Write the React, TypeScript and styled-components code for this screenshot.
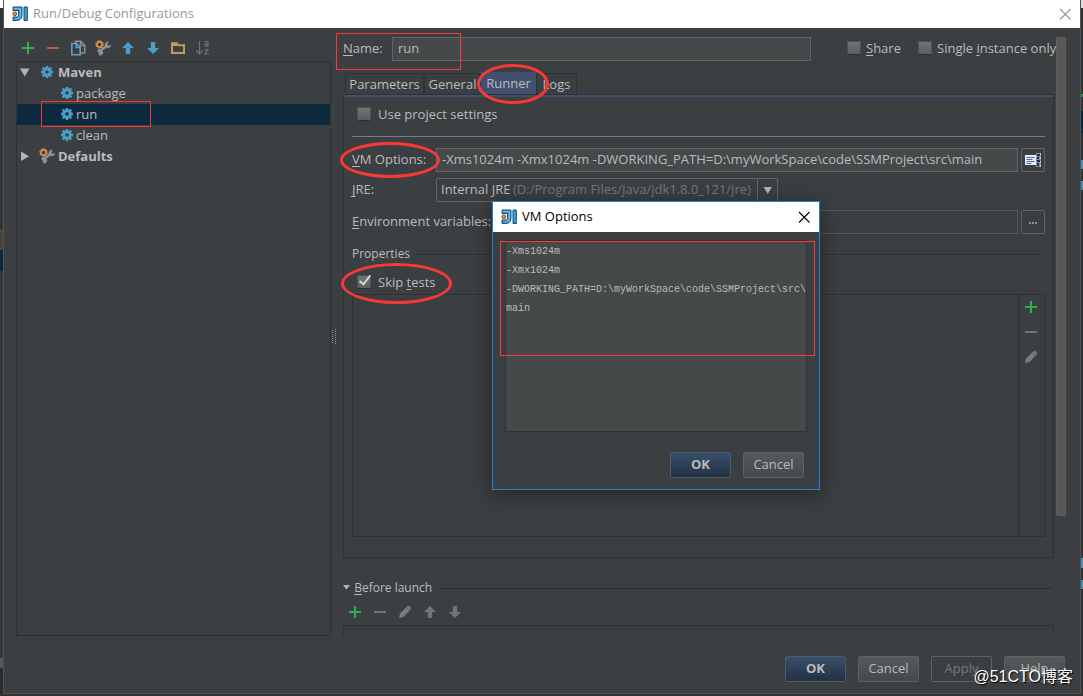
import React from "react";
import styled, { createGlobalStyle, css } from "styled-components";

const c = {
  bg: "#3c3f41",
  field: "#45494a",
  text: "#bbbbbb",
  dim: "#777777",
  edge: "#646464",
  dark: "#2f3133",
  accent: "#41506f",
  mark: "#f83a36",
};

const Global = createGlobalStyle`
  *, *::before, *::after { box-sizing: border-box; }
  body { margin: 0; background: #313335; }
  body, button, input, select, textarea {
    font-family: "Open Sans", "Noto Sans CJK SC", sans-serif;
    font-size: 13px;
    line-height: 18px;
    color: ${c.text};
  }
  u { text-decoration: underline; text-underline-offset: 2px; }
`;

const Desktop = styled.div`
  display: grid;
  grid-template-columns: 3px minmax(0, 1fr) 2px;
  height: 100vh;
  padding-bottom: 2px;
  overflow: hidden;
  position: relative;
`;

const LeftStrip = styled.div`
  background: linear-gradient(#ffffff 0 8px, #313335 8px 229px, #4a4637 229px 250px, #0d293e 250px 271px, #35383a 271px 658px, #55585a 658px 668px, #2b2b2b 668px);
`;

const RightStrip = styled.div`
  background: linear-gradient(#dddddd 0 8px, #313335 8px 94px, #2f8a46 94px 97px, #313335 97px 111px, #0d293e 111px 133px, #313335 133px 160px, #4f8cab 160px 169px, #313335 169px 181px, #4f8cab 181px 190px, #313335 190px 558px, #4f8cab 558px 568px, #313335 568px 580px, #4f8cab 580px 589px, #313335 589px);
`;

const Window = styled.div`
  display: flex;
  flex-direction: column;
  min-height: 0;
  position: relative;
  background: ${c.bg};
  border: 1px solid #515456;
  border-top: 0;
`;

const TitleBar = styled.header<{ $active?: boolean }>`
  display: flex;
  align-items: center;
  flex: none;
  height: ${(p) => (p.$active ? 30 : 28)}px;
  padding: 0 7px 0 8px;
  background: #ffffff;
  color: ${(p) => (p.$active ? "#000000" : "#999999")};
`;

const Title = styled.h1`
  flex: 1;
  margin: 0 0 2px 5px;
  font-size: 13px;
  font-weight: 400;
`;

const IconButton = styled.button`
  display: grid;
  place-items: center;
  flex: none;
  width: 16px;
  height: 16px;
  padding: 0;
  border: 0;
  background: none;
  color: inherit;
`;

const Main = styled.div`
  display: grid;
  grid-template-columns: 315px 5px minmax(0, 1fr);
  flex: 1;
  min-height: 0;
  padding-left: 12px;
`;

const Side = styled.aside`
  display: flex;
  flex-direction: column;
  min-height: 0;
`;

const Toolbar = styled.div<{ $vertical?: boolean }>`
  display: flex;
  flex-direction: ${(p) => (p.$vertical ? "column" : "row")};
  align-items: center;
  gap: 9px;
  padding: ${(p) => (p.$vertical ? "4px 2px 4px 0" : "0 4px")};
`;

const SideToolbar = styled(Toolbar)`
  flex: none;
  height: 33px;
  padding-top: 6px;
`;

const Tree = styled.ul`
  flex: 1;
  margin: 0;
  padding: 0;
  list-style: none;
  border: 1px solid ${c.dark};
`;

const TreeRow = styled.li<{ $depth: number; $selected?: boolean }>`
  display: flex;
  align-items: center;
  gap: ${(p) => (p.$depth ? 1 : 3)}px;
  height: 21px;
  position: relative;
  padding-bottom: 2px;
  padding-left: ${(p) => (p.$depth ? 42 : 0)}px;
  font-weight: ${(p) => (p.$depth ? 400 : 700)};
  background: ${(p) => (p.$selected ? "#0d293e" : "transparent")};
`;

const Twisty = styled.span`
  display: grid;
  place-items: center;
  width: 16px;
  margin-right: 3px;
`;

const Splitter = styled.div`
  display: grid;
  place-items: center;
  padding-top: 8px;
`;

const Scroll = styled.main`
  display: grid;
  grid-template-columns: minmax(0, 1fr) 10px;
  gap: 2px;
  min-height: 0;
  overflow: hidden;
  padding: 9px 14px 0 7px;
`;

const ScrollThumb = styled.div`
  height: 479px;
  border: 1px solid #5f5f5f;
  border-radius: 2px;
  background: #595857;
`;

const NameRow = styled.div`
  display: flex;
  align-items: center;
  position: relative;
  height: 24px;
`;

const NameLabel = styled.label`
  width: 49px;
  padding-bottom: 2px;
`;

const Field = styled.input`
  flex: 1;
  min-width: 0;
  height: 24px;
  padding: 0 5px 2px;
  border: 1px solid ${c.edge};
  background: ${c.field};
  outline: 0;

  &:disabled {
    background: ${c.bg};
    border-color: #555758;
  }
`;

const CheckLabel = styled.label`
  display: flex;
  align-items: center;
  gap: 7px;
  padding-bottom: 2px;
  white-space: nowrap;
`;

const NameChecks = styled.div`
  display: grid;
  grid-template-columns: 71px 136px;
  margin-left: 36px;

  ${CheckLabel} { gap: 5px; }
`;

const Check = styled.input`
  appearance: none;
  flex: none;
  width: 14px;
  height: 14px;
  margin: 0;
  border: 1px solid #4e5051;
  border-bottom-color: #2c2e2f;
  background: linear-gradient(#737475, #5b5d5e);
  position: relative;

  &:checked::after {
    content: "";
    position: absolute;
    left: 4px;
    top: -3px;
    width: 6px;
    height: 12px;
    border: solid #d5d5d5;
    border-width: 0 2px 2px 0;
    transform: rotate(38deg);
  }
`;

const Tabs = styled.div`
  display: flex;
  align-items: flex-end;
  height: 22px;
  margin: 11px 0 0 2px;
`;

const Tab = styled.button<{ $active?: boolean; $width: number }>`
  flex: none;
  width: ${(p) => p.$width}px;
  height: 21px;
  padding: 0;
  border: 1px solid ${c.dark};
  border-bottom: 0;
  border-radius: 3px 3px 0 0;
  background: ${c.bg};
  position: relative;
  ${(p) =>
    p.$active &&
    css`
      height: 22px;
      padding-bottom: 2px;
      border-radius: 0;
      border-color: ${c.accent};
      background: ${c.accent};
    `}
`;

const Panel = styled.section`
  border: 1px solid ${c.dark};
  box-shadow: inset 0 2px ${c.accent};
  padding: 10px 8px 20px;
`;

const CheckRow = styled.div`
  display: flex;
  align-items: center;
  width: max-content;
  height: 20px;
  position: relative;
  padding-left: 5px;
`;

const Rule = styled.hr`
  margin: 11px 0 11px;
  border: 0;
  border-top: 1px solid #7c7d7e;
`;

const FormRow = styled.div<{ $after: number; $label?: number }>`
  display: grid;
  grid-template-columns: ${(p) => p.$label ?? 84}px minmax(0, 1fr) 24px;
  align-items: center;
  height: 24px;
  margin-bottom: ${(p) => p.$after}px;
  white-space: nowrap;
`;

const FormLabel = styled.label`
  position: relative;
  padding-bottom: 2px;
`;

const FormField = styled(Field)`
  margin-right: 3px;
`;

const SquareButton = styled.button`
  display: grid;
  place-items: center;
  height: 24px;
  padding: 0;
  border: 1px solid ${c.edge};
  border-radius: 2px;
  background: ${c.bg};
`;

const Combo = styled.div`
  display: grid;
  grid-template-columns: minmax(0, 1fr) 21px;
  width: 342px;
  height: 24px;
  align-items: center;

  & > * { grid-row: 1; }
`;

const Select = styled.select`
  appearance: none;
  grid-column: 1 / 3;
  height: 24px;
  padding: 0 4px 2px;
  border: 1px solid ${c.edge};
  border-radius: 2px;
  background: ${c.bg};
`;

const ComboHint = styled.span`
  grid-column: 1;
  padding-bottom: 2px;
  padding-left: 77px;
  color: ${c.dim};
  pointer-events: none;
`;

const ComboArrow = styled.span`
  grid-column: 2;
  display: grid;
  place-items: center;
  height: 24px;
  border-left: 1px solid ${c.edge};
  pointer-events: none;
`;

const Legend = styled.h2<{ $gap: number }>`
  display: flex;
  align-items: center;
  gap: 6px;
  height: 18px;
  margin: 0;
  font-size: 12px;
  font-weight: 400;
  margin-bottom: ${(p) => p.$gap}px;

  &::after {
    content: "";
    flex: 1;
    margin-right: 2px;
    border-top: 1px solid ${c.dark};
  }
`;

const PropertyBox = styled.div`
  display: grid;
  grid-template-columns: minmax(0, 1fr) 26px;
  min-height: 243px;
  margin-top: 1px;
  border: 1px solid ${c.dark};
`;

const PropertyTools = styled.div`
  border-left: 1px solid ${c.dark};
`;

const Before = styled.section`
  margin-top: 21px;
`;

const BeforeList = styled.div`
  min-height: 60px;
  margin-top: 5px;
  border: 1px solid ${c.dark};
`;

const Footer = styled.footer`
  display: flex;
  justify-content: flex-end;
  flex: none;
  gap: 12px;
  padding: 20px 15px 11px;
`;

const Button = styled.button<{ $primary?: boolean }>`
  width: 61px;
  height: 26px;
  padding: 0 0 2px;
  border: 1px solid #5e6162;
  border-radius: 2px;
  background: linear-gradient(#555a5c, #44494b);

  &:disabled {
    background: none;
    color: ${c.dim};
  }
  ${(p) =>
    p.$primary &&
    css`
      font-weight: 700;
      border-color: #4d5b6b;
      background: linear-gradient(#384f6b, #233143);
    `}
`;

const Dialog = styled.div`
  display: flex;
  flex-direction: column;
  position: absolute;
  left: 488px;
  top: 201px;
  width: 328px;
  border: 1px solid #1883d7;
  background: ${c.bg};
  box-shadow: 0 4px 20px rgba(0, 0, 0, 0.45);
`;

const DialogBody = styled.div`
  position: relative;
  padding: 8px 12px 0;
`;

const Options = styled.textarea`
  display: block;
  width: 100%;
  height: 192px;
  padding: 1px 0 0;
  border: 1px solid ${c.dark};
  outline: 0;
  resize: none;
  overflow: hidden;
  white-space: pre;
  background: ${c.field};
  font: 10px/19px "Liberation Mono", monospace;
`;

const Callout = styled.span<{ $box: [number, number, number, number]; $round?: boolean }>`
  position: absolute;
  z-index: 1;
  left: ${(p) => p.$box[0]}px;
  top: ${(p) => p.$box[1]}px;
  width: ${(p) => p.$box[2]}px;
  height: ${(p) => p.$box[3]}px;
  border: ${(p) => (p.$round ? 3 : 1)}px solid ${c.mark};
  border-radius: ${(p) => (p.$round ? "50%" : "0")};
  pointer-events: none;
`;

const Watermark = styled.div`
  position: absolute;
  right: 10px;
  bottom: 8px;
  font: 16px/22px "Liberation Sans", "Noto Sans CJK SC", sans-serif;
  color: #ffffff;
  text-shadow: 1px 1px 1px #000000;
  pointer-events: none;
`;

const Svg = ({ children, size = 16 }: { children: React.ReactNode; size?: number }) => (
  <svg width={size} height={size} viewBox="0 0 16 16" aria-hidden="true">
    {children}
  </svg>
);

const Logo = () => (
  <Svg>
    <path d="M1 1h9v7.500c0 4-2 6-5.500 6H1v-3.500h3.500c1.300 0 2-.8 2-2.300V4.500H1z" fill="#3fa0d4" stroke="#1b4a72" />
    <path d="M2 2.500h6.500v6c0 2.500-1.200 4-3.500 4" fill="none" stroke="#7cc4e8" strokeWidth=".8" />
    <path d="M12 1h3.300v13.500H12z" fill="#3fa0d4" stroke="#1b4a72" />
    <circle cx="2.800" cy="7.800" r="1.900" fill="#e8912f" stroke="#5e4327" strokeWidth=".9" />
  </Svg>
);
const Close = () => (
  <Svg>
    <path d="M3 3l10.500 10.500M13.500 3L3 13.500" stroke="currentColor" strokeWidth="1.100" />
  </Svg>
);
const Plus = () => (
  <Svg>
    <path d="M8 2v12M2 8h12" stroke="#2fb04f" strokeWidth="2" />
  </Svg>
);
const Minus = ({ color = "#747474" }: { color?: string }) => (
  <Svg>
    <path d="M2 8h12" stroke={color} strokeWidth="2" />
  </Svg>
);
const Copy = () => (
  <Svg>
    <path d="M5.500 3V1.200h5.200l4 4V13H11" fill="none" stroke="#8c9194" strokeWidth="1.500" />
    <path d="M10.500 1v4.500H15" fill="none" stroke="#8c9194" strokeWidth="1.300" />
    <path d="M1.800 3.500h4.700l3.700 3.700v7.600H1.800z" fill="#3c3f41" stroke="#5ba0c8" strokeWidth="1.600" />
    <path d="M6.200 3.500v4h4" fill="none" stroke="#5ba0c8" strokeWidth="1.400" />
  </Svg>
);
const Wrench = () => (
  <Svg>
    <path
      d="M5 13.500v-2.500M5 11l6.500-5"
      fill="none"
      stroke="#8d9092"
      strokeWidth="2.600"
    />
    <path d="M13.500 1.500a3.600 3.600 0 0 0-3.600 4.800l2.300 1.900a3.300 3.300 0 0 0 3.700-3.700l-2 1.500-1.500-1.500z" fill="#8d9092" />
    <path d="M2 11l1.800 1.500.5 3a3.200 3.200 0 0 0 3.900-3.500L6.500 9.500A3.500 3.500 0 0 0 2 11z" fill="#8d9092" />
    <circle cx="4.500" cy="4.500" r="2.700" fill="none" stroke="#cf8f4a" strokeWidth="1.900" />
    <circle cx="4.500" cy="4.500" r="3.700" fill="none" stroke="#cf8f4a" strokeWidth="1.200" strokeDasharray="1.500 1.400" />
  </Svg>
);
const Arrow = ({ down, color = "#4a9fc9" }: { down?: boolean; color?: string }) => (
  <Svg>
    <path
      d={down ? "M5.800 2h4.400v6H14l-6 6-6-6h3.800z" : "M5.800 14h4.400V8H14L8 2 2 8h3.800z"}
      fill={color}
    />
  </Svg>
);
const Folder = () => (
  <Svg>
    <path d="M2 13V3.200h4.700l1.600 2H14V13z" fill="none" stroke="#c49a5c" strokeWidth="2" />
    <path d="M2 3h5v3H2z" fill="#c49a5c" />
  </Svg>
);
const Sort = () => (
  <Svg>
    <path d="M4.500 1v12.500M1.500 10.500l3 3.300 3-3.300" fill="none" stroke="#747474" strokeWidth="1.200" />
    <path d="M9.500 1.500h3.500V6H10V3.800h3M9.500 9.500h3.500l-3.300 4.500h3.800" fill="none" stroke="#747474" strokeWidth="1.200" />
  </Svg>
);
const Gear = () => (
  <Svg>
    <circle cx="8" cy="8" r="3.300" fill="none" stroke="#4a9fc9" strokeWidth="3" />
    <path
      d="M8 2v2M8 12v2M2 8h2M12 8h2M3.700 3.700l1.500 1.500M10.800 10.800l1.500 1.500M12.300 3.700l-1.500 1.500M5.200 10.800l-1.500 1.500"
      stroke="#4a9fc9"
      strokeWidth="2.400"
    />
  </Svg>
);
const Pencil = () => (
  <Svg>
    <path d="M2 14l1-4.500L10 2.500l2-.7 2 2-.5 2L6.500 13z" fill="#7b7b7b" />
    <path d="M9.500 3.500l3 3" stroke="#606263" strokeWidth="1" />
  </Svg>
);
const Triangle = ({ right, size = 16 }: { right?: boolean; size?: number }) => (
  <Svg size={size}>
    <path d={right ? "M4 3.500v9.500L12 8.200z" : "M3 4.500h9.500L7.700 12.500z"} fill="#b4b4b4" />
  </Svg>
);
const SmallTriangle = () => (
  <svg width="8" height="9" viewBox="0 0 8 9" aria-hidden="true">
    <path d="M0 2h7L3.500 6.500z" fill="#b4b4b4" />
  </svg>
);
const Grip = () => (
  <svg width="5" height="15" viewBox="0 0 5 15" aria-hidden="true">
    <path d="M1.500 1v14M4.500 0v15" stroke="#8b8d8e" strokeDasharray="1 1" />
  </svg>
);
const Expand = () => (
  <Svg>
    <path d="M0 3h11v10H0z" fill="#e8edf8" />
    <path d="M1.500 5.500h8M1.500 7.500h6M1.500 9.500h8M1.500 11.500h5" stroke="#4a68b0" strokeWidth="1" />
    <path d="M11 1h5v14h-5z" fill="#8790a8" />
    <path d="M12 2h3v2h-3zM12 5h2v2h-2zM12 8h3v2h-3zM12 11h2v3h-2z" fill="#262c3c" />
    <path d="M15.500 1v14" stroke="#c4cbdc" strokeDasharray="2 2" />
  </Svg>
);
const Dots = () => (
  <Svg>
    <path d="M4 9h2M7 9h2M10 9h2" stroke="#909090" strokeWidth="2" />
  </Svg>
);

const tools: [string, React.ReactNode][] = [
  ["Add", <Plus />],
  ["Remove", <Minus color="#c75450" />],
  ["Copy", <Copy />],
  ["Edit defaults", <Wrench />],
  ["Move up", <Arrow />],
  ["Move down", <Arrow down />],
  ["New folder", <Folder />],
  ["Sort", <Sort />],
];

const Tools = ({ items }: { items: [string, React.ReactNode][] }) => (
  <>
    {items.map(([name, icon]) => (
      <IconButton key={name} type="button" aria-label={name}>
        {icon}
      </IconButton>
    ))}
  </>
);

const Actions = () => (
  <>
    <Button type="button" $primary>OK</Button>
    <Button type="button">Cancel</Button>
  </>
);

export default function App() {
  return (
    <Desktop>
      <Global />
      <LeftStrip />
      <Window>
        <TitleBar>
          <Logo />
          <Title>Run/Debug Configurations</Title>
          <IconButton type="button" aria-label="Close"><Close /></IconButton>
        </TitleBar>

        <Main>
          <Side>
            <SideToolbar><Tools items={tools} /></SideToolbar>
            <Tree>
              <TreeRow $depth={0}><Twisty><Triangle /></Twisty><Gear />Maven</TreeRow>
              <TreeRow $depth={1}><Gear />package</TreeRow>
              <TreeRow $depth={1} $selected>
                <Gear />run
                <Callout $box={[24, -3, 110, 26]} />
              </TreeRow>
              <TreeRow $depth={1}><Gear />clean</TreeRow>
              <TreeRow $depth={0}><Twisty><Triangle right /></Twisty><Wrench />Defaults</TreeRow>
            </Tree>
          </Side>
          <Splitter><Grip /></Splitter>

          <Scroll>
            <div>
              <NameRow>
                <NameLabel htmlFor="name"><u>N</u>ame:</NameLabel>
                <Field id="name" defaultValue="run" />
                <NameChecks>
                  <CheckLabel><Check type="checkbox" /><span><u>S</u>hare</span></CheckLabel>
                  <CheckLabel><Check type="checkbox" /><span>Single <u>i</u>nstance only</span></CheckLabel>
                </NameChecks>
                <Callout $box={[-7, -4, 125, 37]} />
              </NameRow>

              <Tabs role="tablist">
                <Tab type="button" role="tab" $width={79}>Parameters</Tab>
                <Tab type="button" role="tab" $width={57}>General</Tab>
                <Tab type="button" role="tab" $width={55} $active>
                  Runner
                  <Callout $round $box={[-5, -9, 72, 40]} />
                </Tab>
                <Tab type="button" role="tab" $width={41}>Logs</Tab>
              </Tabs>

              <Panel>
                <CheckRow>
                  <CheckLabel><Check type="checkbox" />Use project settings</CheckLabel>
                </CheckRow>
                <Rule />
                <FormRow $after={6}>
                  <FormLabel htmlFor="vm">
                    <u>V</u>M Options:
                    <Callout $round $box={[-12, -8, 100, 36]} />
                  </FormLabel>
                  <FormField id="vm" defaultValue={"-Xms1024m -Xmx1024m -DWORKING_PATH=D:\\myWorkSpace\\code\\SSMProject\\src\\main"} />
                  <SquareButton type="button" aria-label="Expand VM options"><Expand /></SquareButton>
                </FormRow>
                <FormRow $after={8}>
                  <FormLabel htmlFor="jre"><u>J</u>RE:</FormLabel>
                  <Combo>
                    <Select id="jre"><option>Internal JRE</option></Select>
                    <ComboHint>(D:/Program Files/Java/jdk1.8.0_121/jre)</ComboHint>
                    <ComboArrow><Triangle size={14} /></ComboArrow>
                  </Combo>
                </FormRow>
                <FormRow $after={11} $label={142}>
                  <FormLabel htmlFor="env"><u>E</u>nvironment variables:</FormLabel>
                  <FormField id="env" disabled />
                  <SquareButton type="button" aria-label="Edit environment variables"><Dots /></SquareButton>
                </FormRow>
                <Legend $gap={10}>Properties</Legend>
                <CheckRow>
                  <CheckLabel><Check type="checkbox" defaultChecked /><span>Skip <u>t</u>ests</span></CheckLabel>
                  <Callout $round $box={[-11, -10, 111, 41]} />
                </CheckRow>
                <PropertyBox>
                  <div />
                  <PropertyTools>
                    <Toolbar $vertical>
                      <Tools items={[["Add property", <Plus />], ["Remove property", <Minus />], ["Edit property", <Pencil />]]} />
                    </Toolbar>
                  </PropertyTools>
                </PropertyBox>
              </Panel>

              <Before>
                <Legend $gap={7}>
                  <span><SmallTriangle /> <u>B</u>efore launch</span>
                </Legend>
                <Toolbar>
                  <Tools
                    items={[
                      ["Add task", <Plus />],
                      ["Remove task", <Minus />],
                      ["Edit task", <Pencil />],
                      ["Move task up", <Arrow color="#747474" />],
                      ["Move task down", <Arrow down color="#747474" />],
                    ]}
                  />
                </Toolbar>
                <BeforeList />
              </Before>
            </div>
            <ScrollThumb />
          </Scroll>
        </Main>

        <Footer>
          <Actions />
          <Button type="button" disabled>Apply</Button>
          <Button type="button">Help</Button>
        </Footer>

        <Dialog role="dialog" aria-label="VM Options">
          <TitleBar $active>
            <Logo />
            <Title>VM Options</Title>
            <IconButton type="button" aria-label="Close"><Close /></IconButton>
          </TitleBar>
          <DialogBody>
            <Options
              aria-label="VM Options"
              defaultValue={"-Xms1024m\n-Xmx1024m\n-DWORKING_PATH=D:\\myWorkSpace\\code\\SSMProject\\src\\\nmain"}
            />
            <Callout $box={[7, 9, 315, 115]} />
          </DialogBody>
          <Footer as="div"><Actions /></Footer>
        </Dialog>
      </Window>
      <RightStrip />
      <Watermark>@51CTO博客</Watermark>
    </Desktop>
  );
}
